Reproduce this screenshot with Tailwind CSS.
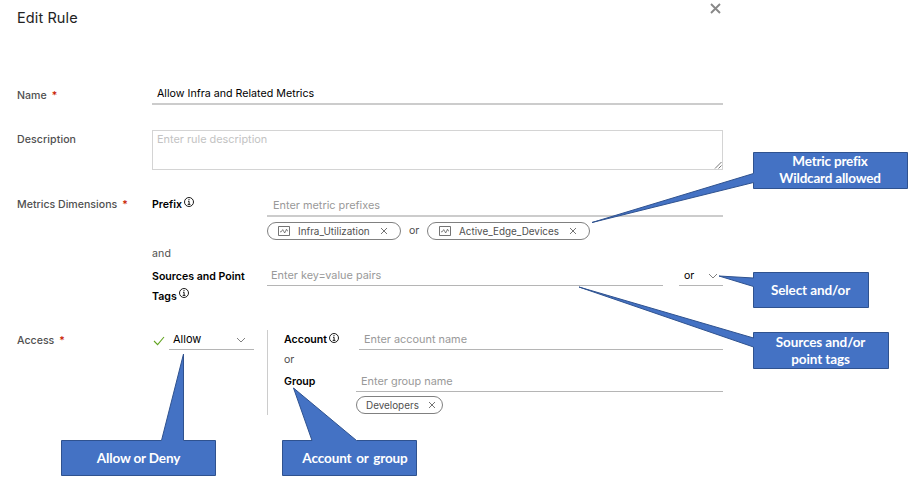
<!DOCTYPE html>
<html lang="en">
<head>
<meta charset="utf-8">
<title>Edit Rule</title>
<script src="https://cdn.jsdelivr.net/npm/@tailwindcss/browser@4"></script>
</head>
<body class="bg-white">
<svg class="hidden">
  <symbol id="info" viewBox="0 0 10 10"><circle cx="5" cy="5" r="4.5" fill="none" stroke="currentColor" stroke-width=".9"/><path d="M5 2v1.200M4 4.300h1.100v3M3.700 7.400h2.700" fill="none" stroke="currentColor" stroke-width=".9"/></symbol>
  <symbol id="x" viewBox="0 0 8 8"><path d="M1 1l6 6M7 1l-6 6" fill="none" stroke="currentColor" stroke-width=".8"/></symbol>
  <symbol id="metric" viewBox="0 0 12 10"><path d="M.5.5h11v9H.5z" fill="none" stroke="currentColor" stroke-width=".8"/><path d="M2 5.800h1.200L4.700 3.600l2 3.400 1.800-3.800L9.400 5H10" fill="none" stroke="currentColor" stroke-width=".7"/></symbol>
  <symbol id="chev" viewBox="0 0 10 6"><path d="M1 1l4 4 4-4" fill="none" stroke="currentColor" stroke-width="1"/></symbol>
</svg>
<main class="relative flex h-[477px] w-[916px] flex-col overflow-hidden bg-white pl-[17px] font-['Inter',sans-serif] text-[10.6px] leading-4 text-[#505050]">
  <header class="flex h-[85px] w-[704px] shrink-0 justify-between">
    <h1 class="mt-[8px] text-[14.5px] leading-5 tracking-[0.1px] text-[#222] whitespace-nowrap">Edit Rule</h1>
    <svg class="mt-[3px] h-[11px] w-[11px] text-[#888]" viewBox="0 0 11 11"><path d="M1 1l9 9M10 1l-9 9" fill="none" stroke="currentColor" stroke-width="1.9"/></svg>
  </header>

  <section class="flex h-[45px] shrink-0">
    <div class="flex w-[135px] pt-[3px] font-medium"><span>Name</span><span class="ml-[5px] text-[#c92100]">*</span></div>
    <div class="h-[20px] w-[571px] border-b-2 border-[#ccc] pt-[1px] pl-[5px] text-[10.7px] text-black">Allow Infra and Related Metrics</div>
  </section>

  <section class="flex h-[62px] shrink-0">
    <div class="w-[135px] pt-[2px] font-medium tracking-[0.08px]">Description</div>
    <div class="relative h-[40px] w-[571px] border border-[#d4d4d4] pl-[4px] text-[10.9px] text-[#c3c3c3]"><span>Enter rule description</span>
      <svg class="absolute right-0 bottom-0 h-[8px] w-[8px]" viewBox="0 0 8 8"><path d="M1 7.500L7.500 1M4.500 7.500l3-3" stroke="#666" fill="none" stroke-width=".9"/></svg>
    </div>
  </section>

  <section class="flex h-[138px] shrink-0">
    <div class="flex w-[135px] pt-[5px] font-medium"><span>Metrics Dimensions</span><span class="ml-[5px] text-[#c92100]">*</span></div>
    <div class="w-[571px]">
      <div class="flex h-[53px]">
        <div class="flex w-[115px] pt-[5px] font-semibold text-black"><span>Prefix</span><svg class="ml-[2px] h-[10px] w-[10px]"><use href="#info"/></svg></div>
        <div class="w-[456px]">
          <div class="h-[25px] border-b-2 border-[#ccc] pl-[6px] pt-[5px] text-[10.9px] text-[#999]">Enter metric prefixes</div>
          <div class="mt-[5px] flex h-[18px] items-center text-[9.9px]">
            <div class="flex h-[18px] w-[134px] items-center rounded-full border border-[#808080] pl-[10px]"><svg class="h-[10px] w-[12px] shrink-0"><use href="#metric"/></svg><span class="-mt-px ml-[8px] w-[80px]">Infra_Utilization</span><svg class="ml-[2px] h-[8px] w-[8px] shrink-0"><use href="#x"/></svg></div>
            <span class="w-[26px] pl-[8px] text-[10.6px]">or</span>
            <div class="flex h-[18px] w-[163px] items-center rounded-full border border-[#808080] pl-[11px]"><svg class="h-[10px] w-[12px] shrink-0"><use href="#metric"/></svg><span class="-mt-px ml-[8px] w-[108px]">Active_Edge_Devices</span><svg class="ml-[2px] h-[8px] w-[8px] shrink-0"><use href="#x"/></svg></div>
          </div>
        </div>
      </div>
      <div class="h-[22px] pt-[1px] tracking-[0.1px]">and</div>
      <div class="flex">
        <div class="w-[115px] font-semibold leading-5 text-black"><div class="whitespace-nowrap">Sources and Point</div><div class="flex"><span>Tags</span><svg class="ml-[2px] mt-[1px] h-[10px] w-[10px]"><use href="#info"/></svg></div></div>
        <div class="h-[19px] w-[396px] border-b border-[#b5b5b5] pl-[4px] text-[10.9px] text-[#999]">Enter key=value pairs</div>
        <div class="ml-[16px] flex h-[19px] w-[44px] border-b border-[#b5b5b5] pl-[5px] pt-[1px] text-black"><span class="w-[24px]">or</span><svg class="mt-[5px] h-[6px] w-[10px] text-[#808080]"><use href="#chev"/></svg></div>
      </div>
    </div>
  </section>

  <section class="flex shrink-0">
    <div class="flex w-[135px] pt-[3px] font-medium"><span>Access</span><span class="ml-[5px] text-[#c92100]">*</span></div>
    <svg class="ml-[1px] mt-[6px] h-[10px] w-[12px]" viewBox="0 0 12 10"><path d="M1 5l3.600 3.600L11 1" fill="none" stroke="#62a420" stroke-width="1.1"/></svg>
    <div class="ml-[4px] flex h-[20px] w-[85px] border-b border-[#b5b5b5] pl-[4px] pt-[1px] text-black"><span class="w-[63px] text-[11px]">Allow</span><svg class="mt-[6px] h-[6px] w-[10px] text-[#808080]"><use href="#chev"/></svg></div>
    <div class="ml-[13px] h-[85px] border-l border-[#ccc] pl-[16px]">
      <div class="flex h-[22px]">
        <div class="flex w-[75px] pt-[2px] font-semibold text-black"><span>Account</span><svg class="ml-[2px] mt-[1px] h-[10px] w-[10px]"><use href="#info"/></svg></div>
        <div class="h-[20px] w-[364px] border-b border-[#b5b5b5] pl-[5px] pt-[1px] text-[10.9px] text-[#999]">Enter account name</div>
      </div>
      <div class="h-[20px]">or</div>
      <div class="flex">
        <div class="w-[72px] pt-[2px] font-semibold text-black">Group</div>
        <div class="w-[367px]">
          <div class="h-[20px] border-b border-[#b5b5b5] pl-[5px] pt-[1px] text-[10.9px] text-[#999]">Enter group name</div>
          <div class="mt-[4px] flex h-[18px] w-[87px] items-center rounded-full border border-[#808080] pl-[9px] text-[9.9px]"><span class="-mt-px w-[61px]">Developers</span><svg class="ml-px h-[8px] w-[8px] shrink-0"><use href="#x"/></svg></div>
        </div>
      </div>
    </div>
  </section>

  <svg class="absolute inset-0 h-[477px] w-[916px]" viewBox="0 0 916 477" fill="#4472c4" stroke="#2f528f" stroke-width="1">
    <path d="M753.500 152.500h154v36h-154v-6L592 222.500l161.500-49z"/>
    <path d="M753.500 272.500h115v35h-115v-21L719 276l34.500 2z"/>
    <path d="M753.500 332.500h135v36h-135v-21.500L579 287l174.500 51z"/>
    <path d="M61.500 440.500h100L183.500 354v86.500h32v35h-154z"/>
    <path d="M282.500 440.500h29.500L293.500 388l63 52.500h60v35h-134z"/>
  </svg>
  <div class="absolute left-[753px] top-[151px] flex h-[37px] w-[154px] items-center justify-center text-center font-['Lato',sans-serif] text-[13.5px] font-bold leading-[17px] tracking-[-0.2px] text-white"><span>Metric prefix<br>Wildcard allowed</span></div>
  <div class="absolute left-[753px] top-[272px] flex h-[36px] w-[115px] items-center justify-center font-['Lato',sans-serif] text-[13.5px] font-bold tracking-[-0.1px] text-white">Select and/or</div>
  <div class="absolute left-[753px] top-[332px] flex h-[37px] w-[135px] items-center justify-center text-center font-['Lato',sans-serif] text-[13.5px] font-bold leading-[17px] tracking-[-0.1px] text-white"><span>Sources and/or<br>point tags</span></div>
  <div class="absolute left-[61px] top-[440px] flex h-[36px] w-[155px] items-center justify-center font-['Lato',sans-serif] text-[13.5px] font-bold tracking-[-0.15px] text-white">Allow or Deny</div>
  <div class="absolute left-[282px] top-[440px] flex h-[36px] w-[135px] items-center justify-center pl-[11px] font-['Lato',sans-serif] text-[13.5px] font-bold tracking-[-0.1px] [word-spacing:1.5px] text-white">Account or group</div>
</main>
</body>
</html>
